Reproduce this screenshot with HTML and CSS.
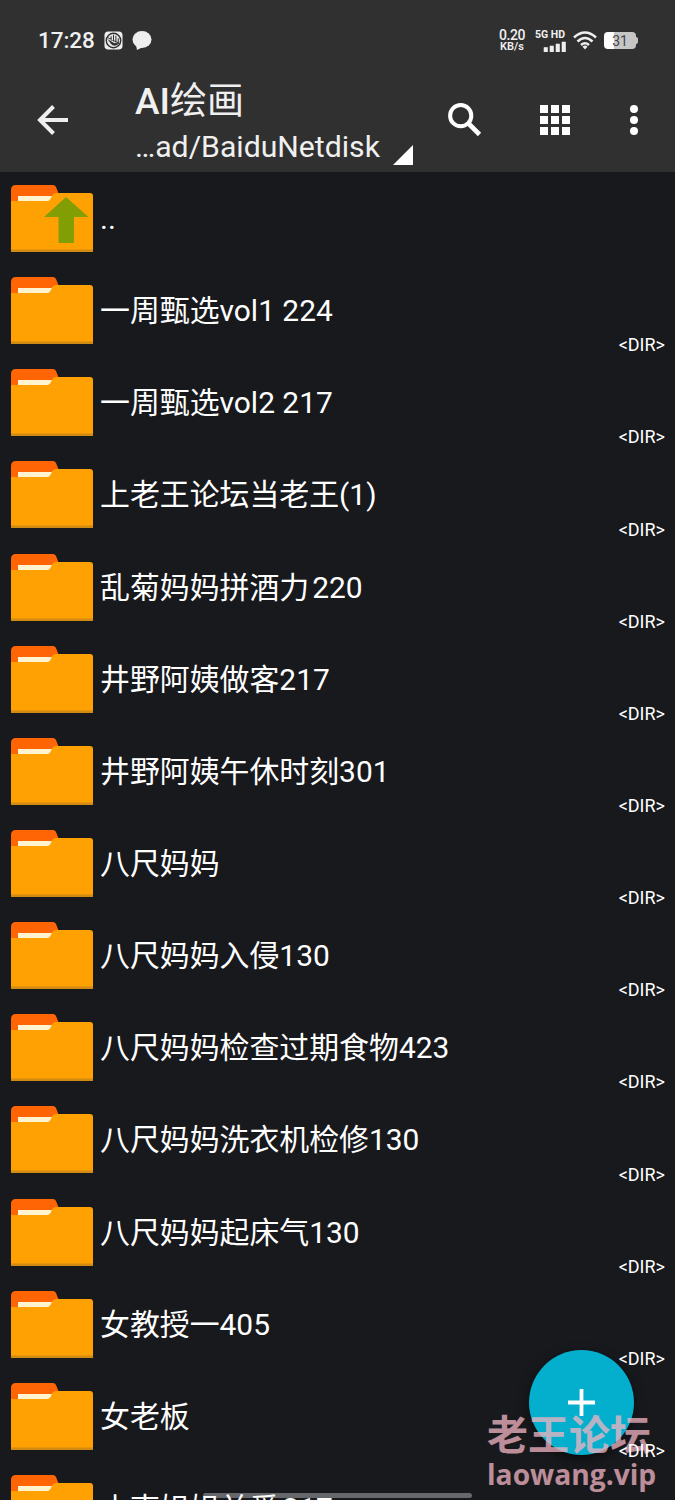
FILE: index.html
```html
<!DOCTYPE html>
<html lang="zh-CN">
<head>
<meta charset="utf-8">
<title>AI绘画</title>
<link rel="stylesheet" href="styles.css">
</head>
<body>
<svg class="defs" aria-hidden="true">
  <symbol id="folder" viewBox="0 0 82 67">
    <path d="M0 17V5Q0 0 5 0H42Q44 0 45 2L49 12V17Z" fill="#ff6505"/>
    <path d="M7 11H42V17H7Z" fill="#fff3d0"/>
    <path d="M0 16H37Q39 15.500 40 13L41 10.500Q42 8 45 8H79Q82 8 82 11V67H0Z" fill="#ffa103"/>
    <path d="M0 64.500H82V67H0Z" fill="#d18a12"/>
  </symbol>
</svg>
<header class="header">
  <div class="status">
    <span class="clock">17:28</span>
    <svg class="hand" viewBox="0 0 20 20"><rect width="19" height="19" x=".5" y=".5" rx="4" fill="#eee"/><circle cx="10" cy="10" r="7.600" fill="none" stroke="#303030" stroke-width="1.500"/><path d="M3.500 8.500L7 10.500L10.500 12.500L16 13Q13 16.500 9 15Q7 13.500 5.500 11Z" fill="#303030"/><path d="M7.500 5.500V10M10 4V11M12.500 5V12M15 7.500V12M4 7L16 13" fill="none" stroke="#303030" stroke-width="1.100"/></svg>
    <svg class="bubble" viewBox="0 0 20 19"><ellipse cx="10" cy="8.500" rx="9.500" ry="8.500" fill="#eee"/><path d="M4 14L5 19L11 16Z" fill="#eee"/></svg>
    <div class="speed"><b>0.20</b><span>KB/s</span></div>
    <div class="signal"><span>5G HD</span><svg viewBox="0 0 23 11"><path d="M1 6.500h3.500V11H1zM7 5h3.500v6H7zM13 3h3.500v8H13zM19 1h3.500v10H19z" fill="#eee" stroke="#eee" stroke-width=".6" stroke-linejoin="round"/></svg></div>
    <svg class="wifi" viewBox="0 0 24 19"><g fill="none" stroke="#eee" stroke-width="2.600"><path d="M1 6.500Q12-3.500 23 6.500M4.500 10.500Q12 3.500 19.500 10.500M8 14Q12 10.500 16 14"/></g><path d="M9.500 15.700Q12 13.500 14.500 15.700L12 18.500Z" fill="#eee"/></svg>
    <div class="battery"><span>31</span></div>
  </div>
  <div class="toolbar">
    <svg class="back" viewBox="0 0 32 32"><path d="M31 16H3M16.500 2.500L3 16l13.500 13.500" fill="none" stroke="#eee" stroke-width="4"/></svg>
    <div class="titles">
      <h1>AI<span>绘画</span></h1>
      <div class="path"><span>…ad/BaiduNetdisk</span><svg viewBox="0 0 20 20"><path d="M20 0V20H0Z" fill="#fff"/></svg></div>
    </div>
    <svg class="search" viewBox="0 0 34 34"><circle cx="12.700" cy="12.700" r="10.600" fill="none" stroke="#fff" stroke-width="4"/><path d="M20.500 20.500L31.500 31.500" stroke="#fff" stroke-width="4.600"/></svg>
    <svg class="grid" viewBox="0 0 30 30"><path d="M0 0h8v8H0zM11 0h8v8h-8zM22 0h8v8h-8zM0 11h8v8H0zM11 11h8v8h-8zM22 11h8v8h-8zM0 22h8v8H0zM11 22h8v8h-8zM22 22h8v8h-8z" fill="#fff"/></svg>
    <svg class="more" viewBox="0 0 8 30"><g fill="#fff"><circle cx="4" cy="4" r="4"/><circle cx="4" cy="15" r="4"/><circle cx="4" cy="26" r="4"/></g></svg>
  </div>
</header>
<main class="list">
  <div class="row"><svg class="folder" viewBox="0 0 82 67"><use href="#folder"/><path d="M55 12L77.500 32H63V58H47.500V32H33Z" fill="#819e04"/></svg><span class="name">..</span></div>
  <div class="row"><svg class="folder"><use href="#folder"/></svg><span class="name">一周甄选vol1 224</span><span class="dir">&lt;DIR&gt;</span></div>
  <div class="row"><svg class="folder"><use href="#folder"/></svg><span class="name">一周甄选vol2 217</span><span class="dir">&lt;DIR&gt;</span></div>
  <div class="row"><svg class="folder"><use href="#folder"/></svg><span class="name">上老王论坛当老王(1)</span><span class="dir">&lt;DIR&gt;</span></div>
  <div class="row"><svg class="folder"><use href="#folder"/></svg><span class="name">乱菊妈妈拼酒力<span class="thin">220</span></span><span class="dir">&lt;DIR&gt;</span></div>
  <div class="row"><svg class="folder"><use href="#folder"/></svg><span class="name">井野阿姨做客217</span><span class="dir">&lt;DIR&gt;</span></div>
  <div class="row"><svg class="folder"><use href="#folder"/></svg><span class="name">井野阿姨午休时刻301</span><span class="dir">&lt;DIR&gt;</span></div>
  <div class="row"><svg class="folder"><use href="#folder"/></svg><span class="name">八尺妈妈</span><span class="dir">&lt;DIR&gt;</span></div>
  <div class="row"><svg class="folder"><use href="#folder"/></svg><span class="name">八尺妈妈入侵130</span><span class="dir">&lt;DIR&gt;</span></div>
  <div class="row"><svg class="folder"><use href="#folder"/></svg><span class="name">八尺妈妈检查过期食物423</span><span class="dir">&lt;DIR&gt;</span></div>
  <div class="row"><svg class="folder"><use href="#folder"/></svg><span class="name">八尺妈妈洗衣机检修130</span><span class="dir">&lt;DIR&gt;</span></div>
  <div class="row"><svg class="folder"><use href="#folder"/></svg><span class="name">八尺妈妈起床气130</span><span class="dir">&lt;DIR&gt;</span></div>
  <div class="row"><svg class="folder"><use href="#folder"/></svg><span class="name">女教授一405</span><span class="dir">&lt;DIR&gt;</span></div>
  <div class="row"><svg class="folder"><use href="#folder"/></svg><span class="name">女老板</span><span class="dir">&lt;DIR&gt;</span></div>
  <div class="row"><svg class="folder"><use href="#folder"/></svg><span class="name">小南姐姐关爱<span class="thin">217</span></span></div>
</main>
<div class="homebar"></div>
<div class="fab"><svg viewBox="0 0 27 27"><path d="M13.500 0V27M0 13.500H27" stroke="#fff" stroke-width="3.800"/></svg></div>
<div class="mark"><span class="mark-cn">老王论坛</span><span class="mark-url">laowang.vip</span></div>
</body>
</html>
```

FILE: styles.css
```css
* { box-sizing: border-box; }
body { margin: 0; width: 675px; height: 1500px; overflow: hidden; position: relative; background: #18191d; color: #fff; font-family: Roboto, "Noto Sans CJK SC", sans-serif; }
svg { display: block; flex: none; }
.defs { position: absolute; width: 0; height: 0; }
.header { height: 172px; background: #303030; color: #f0f0f0; display: flex; flex-direction: column; }
.status { height: 80px; padding-left: 38px; display: flex; align-items: center; }
.clock { width: 66px; font-size: 22.5px; font-weight: 500; letter-spacing: -.1px; }
.hand { width: 19px; height: 19px; }
.bubble { width: 20px; height: 19px; margin-left: 9px; }
.speed { width: 30px; margin-left: 345px; display: flex; flex-direction: column; align-items: center; font-size: 11px; line-height: 10px; font-weight: 600; }
.speed b { font-size: 14px; line-height: 13px; font-weight: 500; letter-spacing: -.4px; }
.signal { width: 33px; margin-left: 6px; display: flex; flex-direction: column; align-items: flex-end; font-size: 10.5px; line-height: 12px; font-weight: 700; white-space: nowrap; }
.signal span { margin-right: 1px; }
.signal svg { width: 23px; height: 11px; }
.wifi { width: 24px; height: 19px; margin-left: 7px; }
.battery { position: relative; width: 32px; height: 17px; margin-left: 7px; border-radius: 4px; background: linear-gradient(90deg, #fff 0 30%, #c6c6c6 30%); color: #444; font-size: 14px; line-height: 18px; text-align: center; }
.battery::after { content: ""; position: absolute; left: 32px; top: 5px; width: 2px; height: 7px; border-radius: 0 2px 2px 0; background: #c6c6c6; }
.toolbar { flex: 1; display: flex; padding-left: 37px; }
.back { width: 32px; height: 32px; margin-top: 24px; }
.titles { width: 279px; margin-left: 66px; }
h1 { margin: 0; font-size: 37px; font-weight: 500; line-height: 44px; height: 49px; white-space: nowrap; }
h1 span { font-weight: 400; }
.path { display: flex; justify-content: space-between; font-size: 30.2px; line-height: 36px; white-space: nowrap; }
.path svg { width: 20px; height: 20px; margin: 16px 1px 0 0; }
.search { width: 34px; height: 34px; margin: 23px 0 0 34px; }
.grid { width: 30px; height: 30px; margin: 25px 0 0 58px; }
.more { width: 8px; height: 30px; margin: 25px 0 0 60px; }
.row { height: 92.15px; padding: 13px 10px 0 11px; display: flex; }
.folder { width: 82px; height: 67px; }
.name { flex: 1; margin-left: 7px; padding-top: 14px; font-size: 29.9px; line-height: 40px; white-space: nowrap; position: relative; z-index: 2; }
.thin { margin-left: 3px; }
.dir { align-self: flex-end; font-size: 18px; line-height: 22px; position: relative; z-index: 2; }
.homebar { position: absolute; left: 203px; top: 1493px; width: 269px; height: 5px; border-radius: 3px; background: #66676a; }
.fab { position: absolute; left: 529px; top: 1350px; width: 105px; height: 105px; border-radius: 50%; background: #03afcd; box-shadow: 0 4px 12px #0008; display: flex; align-items: center; justify-content: center; }
.fab svg { width: 27px; height: 27px; }
.mark { position: absolute; left: 487px; top: 1407px; display: flex; flex-direction: column; color: #f2b5c3; opacity: .75; font-weight: 700; white-space: nowrap; }
.mark-cn { font-size: 41px; line-height: 50px; font-family: "Noto Sans CJK SC", sans-serif; }
.mark-url { font-size: 28.2px; line-height: 34px; font-family: "Open Sans", sans-serif; }
```
